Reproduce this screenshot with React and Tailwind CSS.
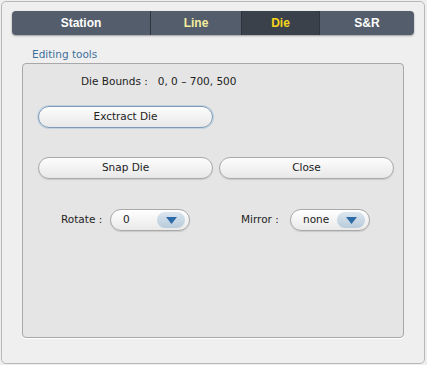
import React from "react";

const font = { fontFamily: '"Lucida Grande","DejaVu Sans","Liberation Sans",sans-serif' };
const tabFont = { fontFamily: '"Liberation Sans",Arial,sans-serif' };

function Combo({ value }) {
  return (
    <div className="flex h-[22px] w-[80px] items-center justify-between rounded-full border border-[#a9a9a9] bg-gradient-to-b from-[#ffffff] to-[#e9e9e9] pl-[12px] pr-[4px] shadow-[0_1px_1px_rgba(0,0,0,0.12)]">
      <span className="text-[10.5px] text-[#222]">{value}</span>
      <div className="flex h-[16px] w-[28px] items-center justify-center rounded-full bg-gradient-to-b from-[#dbe6ef] to-[#b9cbdb]">
        <svg width="11" height="7" viewBox="0 0 11 7">
          <path d="M0 0 L11 0 L5.5 7 Z" fill="#2d6aa8" />
        </svg>
      </div>
    </div>
  );
}

function Btn({ children, w, blue }) {
  return (
    <div
      className={`flex h-[22px] items-center justify-center rounded-full border bg-gradient-to-b from-[#fdfdfd] to-[#e8e8e8] text-[10.5px] text-[#222] ${
        blue ? "border-[#7d9bb8] shadow-[0_0_0_1px_rgba(150,185,215,0.45)]" : "border-[#a9a9a9] shadow-[0_1px_1px_rgba(0,0,0,0.12)]"
      } ${w}`}
    >
      {children}
    </div>
  );
}

export default function App() {
  return (
    <div className="h-[365px] w-[427px] bg-[#eeeeee] p-[1px]" style={font}>
      <div className="flex h-[363px] w-[424px] flex-col rounded-[5px] border border-[#b8b8b8] bg-[#efefef] pt-[9px]">
        <div className="mx-[10px] flex h-[24px] overflow-hidden rounded-[4px] bg-[#545d6b] text-[12px] font-bold shadow-[0_1px_2px_rgba(0,0,0,0.35)]" style={tabFont}>
          <div className="flex w-[138px] items-center justify-center text-white">Station</div>
          <div className="w-[1px] bg-[#2f353e]" />
          <div className="flex w-[90px] items-center justify-center text-[#f2ec9e]">Line</div>
          <div className="w-[1px] bg-[#2f353e]" />
          <div className="flex w-[77px] items-center justify-center bg-[#3b414b] text-[#f5d51c]">Die</div>
          <div className="w-[1px] bg-[#2f353e]" />
          <div className="flex flex-1 items-center justify-center text-white">S&amp;R</div>
        </div>
        <div className="ml-[30px] mt-[12px] text-[10.5px] leading-[14px] text-[#3d6f9c]">Editing tools</div>
        <div className="mx-[20px] mt-[2px] h-[275px] rounded-[4px] border border-[#a8a8a8] bg-[#e5e5e5] shadow-[0_1px_0_#ffffff]">
          <div className="ml-[58px] mt-[10px] text-[10.5px] leading-[14px] text-[#222]">
            Die Bounds :&nbsp;&nbsp; 0, 0 – 700, 500
          </div>
          <div className="ml-[15px] mt-[18px]">
            <Btn w="w-[175px]" blue>Exctract Die</Btn>
          </div>
          <div className="ml-[15px] mt-[29px] flex gap-[6px]">
            <Btn w="w-[175px]">Snap Die</Btn>
            <Btn w="w-[175px]">Close</Btn>
          </div>
          <div className="mt-[30px] flex items-center">
            <span className="ml-[38px] w-[49px] text-[10.5px] text-[#222]">Rotate :</span>
            <Combo value="0" />
            <span className="ml-[51px] w-[49px] text-[10.5px] text-[#222]">Mirror :</span>
            <Combo value="none" />
          </div>
        </div>
      </div>
    </div>
  );
}
